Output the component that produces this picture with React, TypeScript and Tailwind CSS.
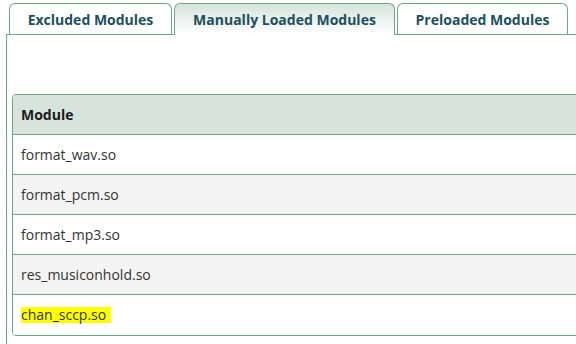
const tabs = [
  { label: "Excluded Modules", width: "w-[163px]", active: false },
  { label: "Manually Loaded Modules", width: "w-[221px]", active: true },
  { label: "Preloaded Modules", width: "w-[171px]", active: false },
];

const modules = [
  "format_wav.so",
  "format_pcm.so",
  "format_mp3.so",
  "res_musiconhold.so",
  "chan_sccp.so",
];

export default function App() {
  return (
    <div className="h-[344px] w-[576px] overflow-hidden bg-white font-['Open_Sans',sans-serif]">
      <div className="ml-[9px] flex items-end gap-[2px] pt-[3px]">
        {tabs.map((t) =>
          t.active ? (
            <div
              key={t.label}
              className={`relative z-10 -mb-px flex h-[32px] shrink-0 items-center justify-center rounded-t-[6px] border border-b-0 border-[#6fa888] bg-gradient-to-b from-[#d6e4dd] to-white ${t.width} text-[14px] font-bold text-[#1d4f5e]`}
            >
              {t.label}
            </div>
          ) : (
            <div
              key={t.label}
              className={`flex h-[31px] shrink-0 items-center justify-center rounded-t-[6px] border border-b-0 border-[#6fa888] bg-white ${t.width} text-[14px] font-bold text-[#1d4f5e]`}
            >
              {t.label}
            </div>
          )
        )}
      </div>
      <div className="ml-[6px] h-[400px] border-l border-t border-[#6fa888] pl-[5px] pt-[59px]">
        <div className="w-[700px] overflow-hidden rounded-[4px] border border-[#6fa888] text-[14px]">
          <div className="flex h-[40px] items-center border-b border-[#6fa888] bg-[#d7e4dd] px-2 font-bold text-[#1a1a1a]">
            Module
          </div>
          {modules.map((m, i) => (
            <div
              key={m}
              className={`flex h-[40px] items-center border-b border-[#6fa888] px-2 text-[#333333] last:border-b-0 ${
                i % 2 === 1 ? "bg-[#f4f4f4]" : "bg-white"
              }`}
            >
              {m === "chan_sccp.so" ? (
                <span className="inline-block h-[16px] bg-[#ffff00] pr-[5px] leading-[16px]">{m}</span>
              ) : (
                m
              )}
            </div>
          ))}
        </div>
      </div>
    </div>
  );
}
